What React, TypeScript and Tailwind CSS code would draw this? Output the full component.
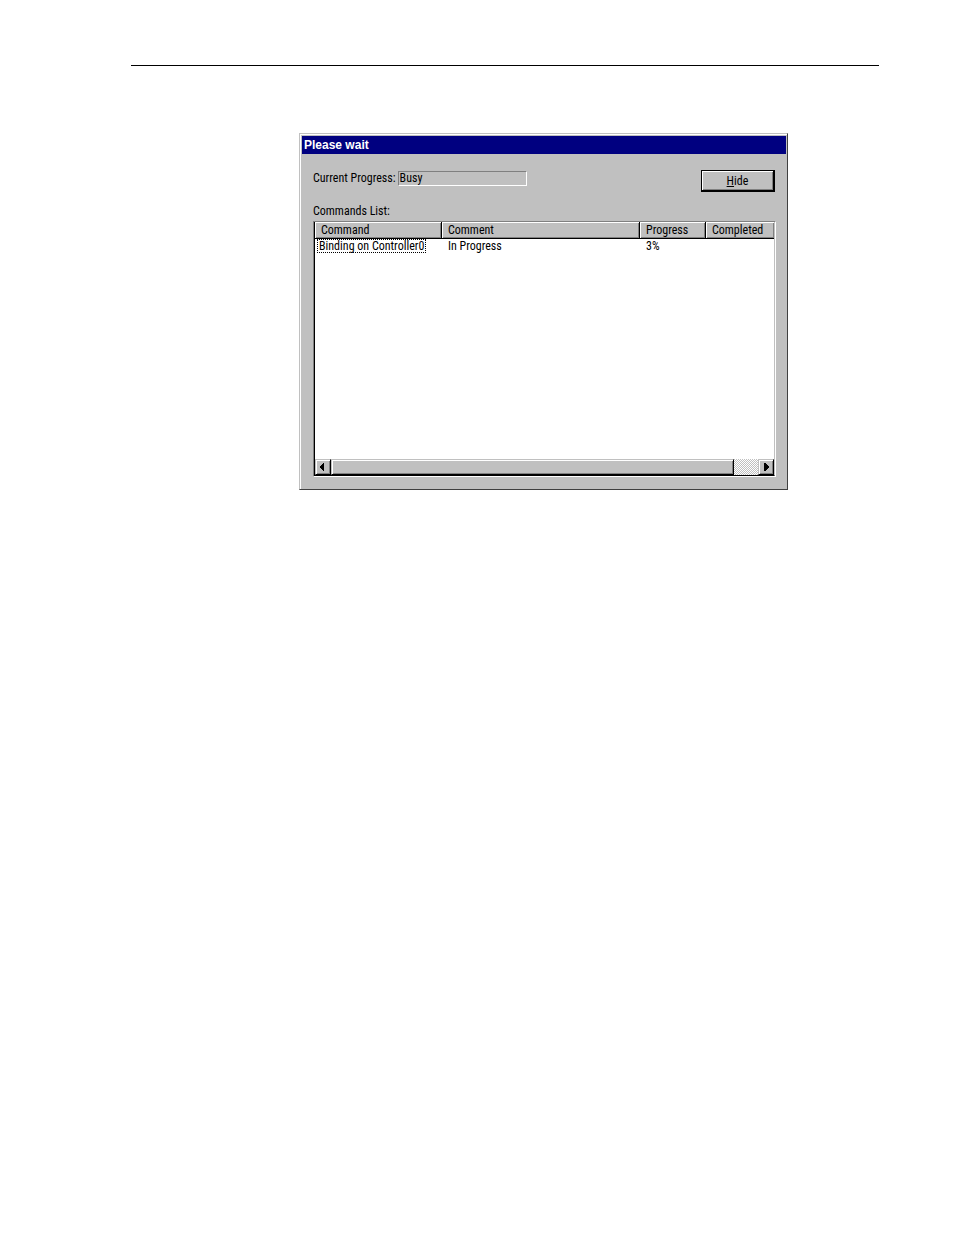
type Command = {
  name: string
  comment: string
  progress: string
  completed: string
}

const commands: Command[] = [
  { name: 'Binding on Controller0', comment: 'In Progress', progress: '3%', completed: '' },
]

const columns = ['Command', 'Comment', 'Progress', 'Completed']

function ScrollButton({ label, points }: { label: string; points: string }) {
  return (
    <button
      type="button"
      aria-label={label}
      className="flex h-4 w-4 shrink-0 items-center justify-center border border-t-[#c0c0c0] border-l-[#c0c0c0] border-r-black border-b-black bg-[#c0c0c0] shadow-[inset_1px_1px_0_#fff,inset_-1px_-1px_0_#808080]"
    >
      <svg width="8" height="8" viewBox="0 0 8 8" className="shrink-0" shapeRendering="crispEdges">
        <polygon points={points} fill="#000" />
      </svg>
    </button>
  )
}

function ScrollBar() {
  return (
    <div className="flex h-4 bg-[repeating-conic-gradient(#c0c0c0_0_25%,#fff_0_50%)] bg-[length:2px_2px]">
      <ScrollButton label="Scroll left" points="5,0 5,8 4,8 0,4 4,0" />
      <div className="h-4 w-[403px] border border-t-[#c0c0c0] border-l-[#c0c0c0] border-r-black border-b-black bg-[#c0c0c0] shadow-[inset_1px_1px_0_#fff,inset_-1px_-1px_0_#808080]" />
      <div className="flex-1" />
      <ScrollButton label="Scroll right" points="2,0 3,0 7,4 3,8 2,8" />
    </div>
  )
}

function CommandTable() {
  return (
    <table aria-labelledby="commands-label" className="w-full table-fixed border-separate border-spacing-0 text-left">
      <colgroup>
        <col className="w-[127px]" />
        <col className="w-[198px]" />
        <col className="w-[66px]" />
        <col />
      </colgroup>
      <thead>
        <tr className="bg-[#c0c0c0]">
          {columns.map((column) => (
            <th
              key={column}
              className="h-[17px] border-r border-b border-black p-0 pl-1.5 font-normal leading-4 shadow-[inset_1px_1px_0_#fff,inset_-1px_-1px_0_#808080] last:border-r-0"
            >
              {column}
            </th>
          ))}
        </tr>
      </thead>
      <tbody className="leading-[14px]">
        {commands.map((command) => (
          <tr key={command.name}>
            <td className="p-0 pl-0.5">
              <span className="block w-fit border border-dotted border-black px-px leading-3 whitespace-nowrap">
                {command.name}
              </span>
            </td>
            <td className="p-0 pl-1.5">{command.comment}</td>
            <td className="p-0 pl-1.5">{command.progress}</td>
            <td className="p-0 pl-1.5">{command.completed}</td>
          </tr>
        ))}
      </tbody>
    </table>
  )
}

function ProgressDialog() {
  return (
    <section
      aria-labelledby="dialog-title"
      className="w-full max-w-[489px] border border-t-[#c0c0c0] border-l-[#c0c0c0] border-r-[#404040] border-b-[#404040] bg-[#c0c0c0] pt-0.5 pr-px pl-0.5 font-['Roboto_Condensed',Lato,'Liberation_Sans',sans-serif] text-xs leading-4 text-black shadow-[inset_1px_1px_0_#fff]"
    >
      <h1
        id="dialog-title"
        className="h-[18px] bg-[#000080] pl-0.5 font-['Liberation_Sans',Arial,sans-serif] text-xs font-bold leading-[18px] text-white"
      >
        Please wait
      </h1>
      <div className="pt-4 pr-[10px] pb-3 pl-[11px]">
        <div className="flex items-start justify-between pr-px">
          <div className="flex items-center gap-0.5">
            <label htmlFor="progress" className="whitespace-nowrap">
              Current Progress:
            </label>
            <input
              id="progress"
              readOnly
              value="Busy"
              className="h-[15px] w-[129px] border border-t-[#808080] border-l-[#808080] border-r-white border-b-white bg-[#c0c0c0] px-px outline-none"
            />
          </div>
          <button
            type="button"
            className="h-[22px] w-[74px] border border-r-2 border-b-2 border-black bg-[#c0c0c0] shadow-[inset_1px_1px_0_#fff,inset_-1px_-1px_0_#808080]"
          >
            <span className="underline">H</span>ide
          </button>
        </div>
        <h2 id="commands-label" className="mt-[11px] mb-0.5">
          Commands List:
        </h2>
        <div className="border border-t-[#808080] border-l-[#808080] border-r-white border-b-white">
          <div className="flex min-h-[254px] flex-col justify-between border-r border-b border-l border-black border-r-[#c0c0c0] bg-white">
            <CommandTable />
            <ScrollBar />
          </div>
        </div>
      </div>
    </section>
  )
}

export default function App() {
  return (
    <main className="min-h-screen bg-white pt-[65px] pr-[75px] pl-[131px]">
      <hr className="border-t border-black" />
      <div className="mt-[67px] pl-[168px]">
        <ProgressDialog />
      </div>
    </main>
  )
}
